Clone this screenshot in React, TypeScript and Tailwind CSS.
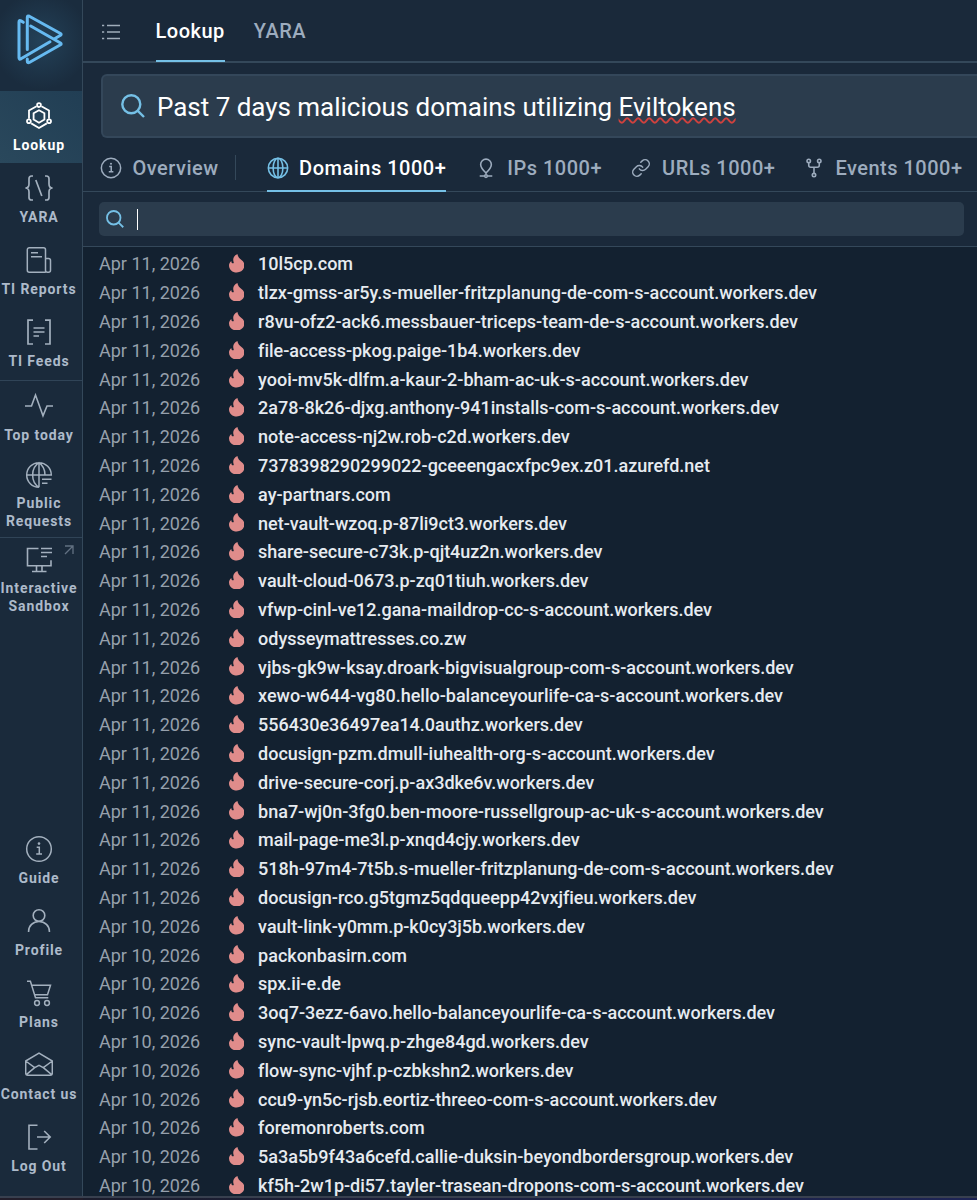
import type { ReactNode } from "react";
import { Link } from "lucide-react";

type NavItem = { label: string[]; icon: ReactNode; active?: boolean; external?: boolean };

function Svg({ size = 28, sw = 1.5, className = "", children }: { size?: number; sw?: number; className?: string; children: ReactNode }) {
  return (
    <svg width={size} height={size} viewBox="0 0 28 28" fill="none" stroke="currentColor" strokeWidth={sw} className={`shrink-0 ${className}`}>
      {children}
    </svg>
  );
}

function GlobePaths() {
  return (
    <>
      <circle cx="14" cy="14" r="12.3" />
      <ellipse cx="14" cy="14" rx="6.2" ry="12.3" />
      <path d="M1.7 14h24.6M14 1.7v24.6" />
    </>
  );
}

function InfoPaths() {
  return (
    <>
      <circle cx="14" cy="14" r="12.3" />
      <path d="M11.7 12.2h2.6v6.6M11.2 18.9h5.8" />
      <circle cx="14" cy="8.6" r="1.3" fill="currentColor" stroke="none" />
    </>
  );
}

const mainNav: NavItem[] = [
  {
    label: ["Lookup"],
    active: true,
    icon: (
      <Svg sw={1.8}>
        <path d="M11.6 4.2 4 8.5v8.3M16.4 4.2 24 8.5v8.3M6.2 21.4 14 26l7.8-4.6" />
        <path d="m14 8.2 5.4 3v6.4L14 20.7l-5.4-3.1v-6.4z" />
        <circle cx="14" cy="3.1" r="1.9" />
        <circle cx="3.9" cy="19.2" r="1.9" />
        <circle cx="24.1" cy="19.2" r="1.9" />
      </Svg>
    ),
  },
  {
    label: ["YARA"],
    icon: (
      <Svg sw={1.7}>
        <path d="M8 2H6.6Q4 2 4 4.7V10q0 4-3.6 4Q4 14 4 18v5.5Q4 26 6.6 26H8M20 2h1.4Q24 2 24 4.7V10q0 4 3.6 4Q24 14 24 18v5.5Q24 26 21.4 26H20M10.8 6l6 16" />
      </Svg>
    ),
  },
  {
    label: ["TI Reports"],
    icon: (
      <Svg>
        <path d="M20.5 26.3H4.3a2 2 0 0 1-2-2V3.7a2 2 0 0 1 2-2h14.2a2 2 0 0 1 2 2v20.6a2 2 0 0 0 2 2h1a2 2 0 0 0 2-2V14.5a2 2 0 0 0-2-2h-3M6 6.7h7M6 10.7h11" />
      </Svg>
    ),
  },
  {
    label: ["TI Feeds"],
    icon: (
      <Svg sw={1.7}>
        <path d="M8 2.2H3V26h5M20 2.2h5V26h-5M8.5 10h11M8.5 14h11M8.5 18h5.5" />
      </Svg>
    ),
  },
];

const requestNav: NavItem[] = [
  {
    label: ["Top today"],
    icon: (
      <Svg sw={1.6}>
        <path d="M0 14h6.5L10.5 3l7.5 20.8L22 14h6" />
      </Svg>
    ),
  },
  {
    label: ["Public", "Requests"],
    icon: (
      <Svg>
        <path d="M14 26.3A12.3 12.3 0 1 1 26.3 14H1.7M14 26.3C5.5 21 5.5 7 14 1.7c4 2.8 6 7 6 12.3M14 1.7v24.6M17 18.3h9.5M17 22.3h5.5" />
      </Svg>
    ),
  },
];

const sandboxNav: NavItem[] = [
  {
    label: ["Interactive", "Sandbox"],
    external: true,
    icon: (
      <Svg sw={1.6}>
        <path d="M13.5 2.5h-11v17.3H26v-5.5M11.5 19.8v5.7M17 19.8v5.7M7 25.5h14.5M16 2.5h11M16 6.5h11M16 10.5h6" />
      </Svg>
    ),
  },
];

const bottomNav: NavItem[] = [
  { label: ["Guide"], icon: <Svg><InfoPaths /></Svg> },
  {
    label: ["Profile"],
    icon: (
      <Svg sw={1.6}>
        <circle cx="14" cy="8.5" r="5.8" />
        <path d="M3.6 25v-.8C3.6 19 8 14.5 14 14.5S24.4 19 24.4 24.2v.8" />
      </Svg>
    ),
  },
  {
    label: ["Plans"],
    icon: (
      <Svg>
        <path d="M2 2.3h3.4l5.1 16.5h12.8M6.6 6.3h18.9L22.5 15.7H9.6" />
        <circle cx="12" cy="24" r="2.4" />
        <circle cx="22" cy="24" r="2.4" />
      </Svg>
    ),
  },
  {
    label: ["Contact us"],
    icon: (
      <Svg>
        <path d="M.7 10 14 2.2 27.3 10v12.2a2 2 0 0 1-2 2H2.7a2 2 0 0 1-2-2zM.7 10l9 6.7L14 14.4l4.3 2.3 9-6.7M1.3 23.6l8.4-6.9M26.7 23.6l-8.4-6.9" />
      </Svg>
    ),
  },
  {
    label: ["Log Out"],
    icon: (
      <Svg sw={1.6}>
        <path d="M12.5 2.2H4V26h8.5M12 14h12.8M19.2 8l6 6-6 6" />
      </Svg>
    ),
  },
];

const domains = [
  "10l5cp.com",
  "tlzx-gmss-ar5y.s-mueller-fritzplanung-de-com-s-account.workers.dev",
  "r8vu-ofz2-ack6.messbauer-triceps-team-de-s-account.workers.dev",
  "file-access-pkog.paige-1b4.workers.dev",
  "yooi-mv5k-dlfm.a-kaur-2-bham-ac-uk-s-account.workers.dev",
  "2a78-8k26-djxg.anthony-941installs-com-s-account.workers.dev",
  "note-access-nj2w.rob-c2d.workers.dev",
  "7378398290299022-gceeengacxfpc9ex.z01.azurefd.net",
  "ay-partnars.com",
  "net-vault-wzoq.p-87li9ct3.workers.dev",
  "share-secure-c73k.p-qjt4uz2n.workers.dev",
  "vault-cloud-0673.p-zq01tiuh.workers.dev",
  "vfwp-cinl-ve12.gana-maildrop-cc-s-account.workers.dev",
  "odysseymattresses.co.zw",
  "vjbs-gk9w-ksay.droark-bigvisualgroup-com-s-account.workers.dev",
  "xewo-w644-vg80.hello-balanceyourlife-ca-s-account.workers.dev",
  "556430e36497ea14.0authz.workers.dev",
  "docusign-pzm.dmull-iuhealth-org-s-account.workers.dev",
  "drive-secure-corj.p-ax3dke6v.workers.dev",
  "bna7-wj0n-3fg0.ben-moore-russellgroup-ac-uk-s-account.workers.dev",
  "mail-page-me3l.p-xnqd4cjy.workers.dev",
  "518h-97m4-7t5b.s-mueller-fritzplanung-de-com-s-account.workers.dev",
  "docusign-rco.g5tgmz5qdqueepp42vxjfieu.workers.dev",
  "vault-link-y0mm.p-k0cy3j5b.workers.dev",
  "packonbasirn.com",
  "spx.ii-e.de",
  "3oq7-3ezz-6avo.hello-balanceyourlife-ca-s-account.workers.dev",
  "sync-vault-lpwq.p-zhge84gd.workers.dev",
  "flow-sync-vjhf.p-czbkshn2.workers.dev",
  "ccu9-yn5c-rjsb.eortiz-threeo-com-s-account.workers.dev",
  "foremonroberts.com",
  "5a3a5b9f43a6cefd.callie-duksin-beyondbordersgroup.workers.dev",
  "kf5h-2w1p-di57.tayler-trasean-dropons-com-s-account.workers.dev",
];

// the first 23 results were seen on Apr 11, the rest a day earlier
const rows = domains.map((domain, i) => ({ domain, date: i < 23 ? "Apr 11, 2026" : "Apr 10, 2026" }));

function SidebarItem({ item }: { item: NavItem }) {
  return (
    <a
      className={`relative flex shrink-0 flex-col items-center pr-[4px] ${
        item.active ? "bg-linear-to-tr from-[#2a485c] to-[#213e54] text-white" : "text-[#a3b0be]"
      } ${item.label.length > 1 ? "h-[84px] gap-[6px] pt-[8px]" : "h-[72px] gap-[7px] pt-[11px]"}`}
    >
      {item.icon}
      <span className={`text-center text-[14px] leading-[17.5px] font-bold tracking-[0.9px] whitespace-nowrap ${item.active ? "text-white" : "text-[#adbaca]"}`}>
        {item.label.map((line) => (
          <span key={line} className="block">
            {line}
          </span>
        ))}
      </span>
      {item.external && (
        <svg width="10" height="10" viewBox="0 0 10 10" fill="none" stroke="#627182" strokeWidth="1.3" className="absolute top-[7px] right-[8px]">
          <path d="M1 1h8v8M9 1 1 9" />
        </svg>
      )}
    </a>
  );
}

function SearchIcon({ size }: { size: number }) {
  return (
    <svg width={size} height={size} viewBox="0 0 24 24" fill="none" stroke="#75c0e6" strokeWidth="2.4" className="shrink-0">
      <circle cx="10.3" cy="10.3" r="9" />
      <path d="m16.8 16.8 6.2 6.2" />
    </svg>
  );
}

function Flame() {
  return (
    <svg width="15.5" height="18.5" viewBox="0 0 46 55" fill="#e08c8b" className="mb-[2px] shrink-0">
      <path d="M25 0C14 5 10 15 14 25c1 3-4 4-6 1-1-2-1-3-1-5C2 25 0 30 0 34c0 12 10 21 23 21s23-9 23-22c0-7-4-11-9-15C31 13 26 8 25 0z" />
    </svg>
  );
}

function Sidebar() {
  return (
    <aside className="flex w-[83px] shrink-0 flex-col border-r border-[#34485a] bg-[#1a2a3b]">
      <div className="flex h-[91px] shrink-0 bg-[radial-gradient(circle_at_50%_45%,#234158_0%,#1a2c3e_75%)] pt-[14px] pl-[17px]">
        <svg width="46" height="51" viewBox="0 0 46 51" fill="none" stroke="#66baf1" strokeWidth="3" strokeLinejoin="round" strokeLinecap="round">
          <path d="M6.3 8.3 4 6.9q-2-1-2 1V43.8q0 2 2 1L33 27.7" />
          <path d="M10.3 35.5V3.5q0-2.3 2-1.3L43.5 19.5q1.3.8 0 1.8L38 24.5" />
          <path d="M13.7 12 43.5 29q1.3.9 0 1.7L12.3 48.5q-2 1-2-1.5v-2" />
        </svg>
      </div>
      {mainNav.map((item) => (
        <SidebarItem key={item.label[0]} item={item} />
      ))}
      <div className="mt-px border-t border-[#304457]">
        {requestNav.map((item) => (
          <SidebarItem key={item.label[0]} item={item} />
        ))}
      </div>
      <div className="border-t border-[#304457]">
        {sandboxNav.map((item) => (
          <SidebarItem key={item.label[0]} item={item} />
        ))}
      </div>
      <div className="mt-auto pb-[12px]">
        {bottomNav.map((item) => (
          <SidebarItem key={item.label[0]} item={item} />
        ))}
      </div>
    </aside>
  );
}

function Header() {
  return (
    <header className="flex h-[63px] shrink-0 border-b-2 border-[#34485a] pl-[19px]">
      <svg width="18" height="18" viewBox="0 0 18 18" fill="none" stroke="#a0adba" strokeWidth="1.7" className="mt-[23px] mr-[35.5px]">
        <path d="M0 2.5h2.2M5 2.5h13M0 9h2.2M5 9h13M0 15.5h2.2M5 15.5h13" />
      </svg>
      <nav className="flex gap-[29px] text-[20px] leading-[62px] font-medium tracking-[0.5px]">
        <a className="h-[62px] border-b-2 border-[#75c0e6] text-white">Lookup</a>
        <a className="text-[#9dacbe]">YARA</a>
      </nav>
    </header>
  );
}

function ResultTabs() {
  return (
    <nav className="flex h-[54px] shrink-0 border-b border-[#34485a] pl-[17px] text-[20px] leading-[61px] font-medium tracking-[0.5px] whitespace-nowrap text-[#9dacbe]">
      <a className="flex">
        <Svg size={22} sw={1.9} className="mt-[19px] mr-[10.5px]">
          <InfoPaths />
        </Svg>
        Overview
      </a>
      <span className="mt-[17px] mr-[31px] ml-[16px] h-[25px] w-px bg-[#34485a]" />
      <a className="flex h-[54px] border-b-2 border-[#75c0e6] text-white">
        <Svg size={22} sw={2} className="mt-[19px] mr-[10.5px] text-[#75c0e6]">
          <GlobePaths />
        </Svg>
        Domains 1000+
      </a>
      <a className="ml-[29px] flex">
        <Svg size={22} sw={2} className="mt-[19px] mr-[10px]">
          <path d="M14 20.3C10.5 17 7.2 13.5 7.2 9.5a6.8 6.8 0 0 1 13.6 0c0 4-3.3 7.5-6.8 10.8zM14 20.3v1.7M6 24.2H12M16 24.2h6" />
          <circle cx="14" cy="24.2" r="1.7" />
        </Svg>
        IPs 1000+
      </a>
      <a className="ml-[28px] flex">
        <Link size={20} strokeWidth={1.8} className="mt-[20px] mr-[11px] ml-px shrink-0" />
        URLs 1000+
      </a>
      <a className="ml-[28px] flex">
        <Svg size={22} sw={2} className="mt-[19px] mr-[10px]">
          <circle cx="7.3" cy="5" r="2.2" />
          <circle cx="20.7" cy="5" r="2.2" />
          <circle cx="14" cy="23" r="2.2" />
          <path d="M7.3 7.2v3.3q0 2.5 2.5 2.5h8.4q2.5 0 2.5-2.5V7.2M14 13v7.8" />
        </Svg>
        Events 1000+
      </a>
    </nav>
  );
}

export default function App() {
  return (
    <div className="flex h-[1200px] w-[977px] flex-col overflow-hidden bg-[#1b1c2c] font-[Roboto,sans-serif]">
      <div className="flex h-[1196px] shrink-0 overflow-hidden">
        <Sidebar />
        <main className="flex min-w-0 flex-1 flex-col overflow-hidden bg-[#1a293a]">
          <Header />
          <div className="mt-[11px] ml-[18px] flex h-[64px] shrink-0 items-center rounded-l-[6px] border-2 border-r-0 border-[#34475a] bg-[#2b3c4d] pl-[18px]">
            <SearchIcon size={24} />
            <p className="mt-[2px] ml-[12px] text-[26px] leading-[40px] tracking-[-0.025px] whitespace-nowrap text-white">
              Past 7 days malicious domains utilizing{" "}
              <span className="underline decoration-[#d0413d] decoration-wavy decoration-[1.5px] underline-offset-[1px] [text-decoration-skip-ink:none]">Eviltokens</span>
            </p>
          </div>
          <ResultTabs />
          <div className="flex h-[55px] shrink-0 border-b border-[#34485a] pt-[10px] pr-[13px] pl-[16px]">
            <div className="flex h-[34px] flex-1 items-center rounded-[5px] bg-[#2b3c4d] pl-[7px]">
              <SearchIcon size={18} />
              <span className="ml-[13px] h-[21px] w-px bg-white" />
            </div>
          </div>
          <ul className="flex-1 overflow-hidden bg-[#132130] pt-[3px]">
            {rows.map(({ domain, date }) => (
              <li key={domain} className="flex h-[28.81px] items-center pl-[16px] text-[18px] leading-[28px] whitespace-nowrap">
                <span className="w-[129.6px] text-[#96a0ac]">{date}</span>
                <Flame />
                <span className="ml-[14px] font-medium tracking-[-0.015px] text-[#e6ebf0]">{domain}</span>
              </li>
            ))}
          </ul>
        </main>
      </div>
      <div className="flex h-[4px] shrink-0 border-t-2 border-[#38404f]">
        <span className="w-[83px] bg-[#221d2a]" />
        <span className="flex-1 bg-linear-to-r from-[#1b1c2c] to-[#1d2455]" />
      </div>
    </div>
  );
}
